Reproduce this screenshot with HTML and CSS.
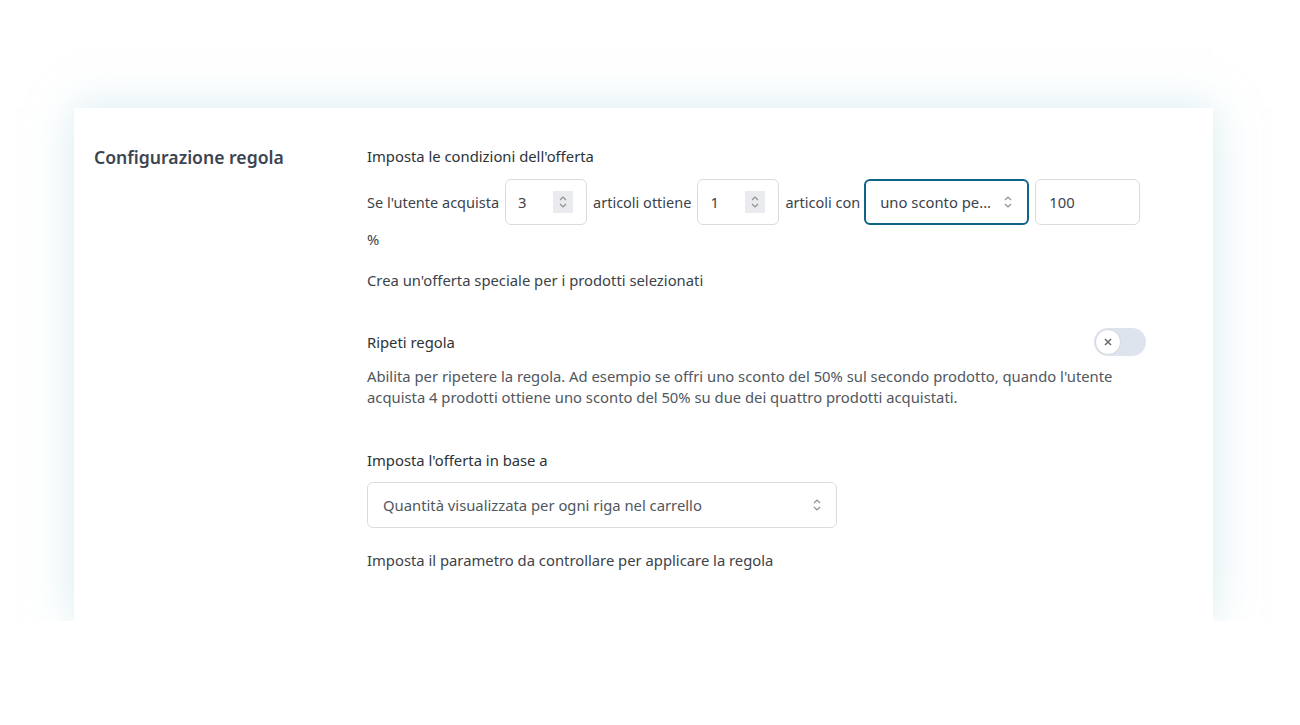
FILE: index.html
```html
<!DOCTYPE html>
<html lang="it">
<head>
  <meta charset="UTF-8">
  <meta name="viewport" content="width=device-width, initial-scale=1.0">
  <title>Configurazione regola</title>
  <link rel="stylesheet" href="styles.css">
</head>
<body>
  <div class="card">
    <!-- Colonna titolo -->
    <div class="side">
      <h2>Configurazione regola</h2>
    </div>

    <!-- Colonna campi -->
    <div class="fields">
      <div class="field">
        <div class="label">Imposta le condizioni dell'offerta</div>
        <div class="condition-row">
          <span>Se l'utente acquista</span>
          <div class="input number">
            <span>3</span>
            <span class="spin">
              <svg width="10" height="14" viewBox="0 0 10 14"><path d="M2 5l3-3 3 3M2 9l3 3 3-3" fill="none" stroke="#8c8f94" stroke-width="1.2"/></svg>
            </span>
          </div>
          <span>articoli ottiene</span>
          <div class="input number">
            <span>1</span>
            <span class="spin">
              <svg width="10" height="14" viewBox="0 0 10 14"><path d="M2 5l3-3 3 3M2 9l3 3 3-3" fill="none" stroke="#8c8f94" stroke-width="1.2"/></svg>
            </span>
          </div>
          <span class="tight">articoli con</span>
          <div class="input select focused">
            <span>uno sconto pe...</span>
            <svg width="10" height="14" viewBox="0 0 10 14"><path d="M2 5l3-3 3 3M2 9l3 3 3-3" fill="none" stroke="#8c8f94" stroke-width="1.2"/></svg>
          </div>
          <div class="input amount">100</div>
        </div>
        <div class="unit">%</div>
        <p class="help">Crea un'offerta speciale per i prodotti selezionati</p>
      </div>

      <div class="field repeat">
        <div class="toggle-row">
          <div class="label">Ripeti regola</div>
          <div class="toggle">
            <span class="knob">
              <svg width="8" height="8" viewBox="0 0 8 8"><path d="M1 1l6 6M7 1l-6 6" stroke="#6b6e73" stroke-width="1.6"/></svg>
            </span>
          </div>
        </div>
        <p class="desc">Abilita per ripetere la regola. Ad esempio se offri uno sconto del 50% sul secondo prodotto, quando l'utente acquista 4 prodotti ottiene uno sconto del 50% su due dei quattro prodotti acquistati.</p>
      </div>

      <div class="field base">
        <div class="label">Imposta l'offerta in base a</div>
        <div class="input wide-select">
          <span>Quantità visualizzata per ogni riga nel carrello</span>
          <svg width="10" height="14" viewBox="0 0 10 14"><path d="M2 5l3-3 3 3M2 9l3 3 3-3" fill="none" stroke="#8c8f94" stroke-width="1.2"/></svg>
        </div>
        <p class="help last">Imposta il parametro da controllare per applicare la regola</p>
      </div>
    </div>
  </div>
</body>
</html>
```

FILE: styles.css
```css
/* Reset */
* {
  margin: 0;
  padding: 0;
  box-sizing: border-box;
}

body {
  font-family: 'Noto Sans', 'Open Sans', sans-serif;
  font-size: 14.8px;
  line-height: 20px;
  color: #3c434a;
  background: #fff;
  padding: 108px 0 0 74px;
}

/* Carta */
.card {
  width: 1139px;
  background: #fff;
  display: flex;
  padding: 39px 67px 51px 20px;
  box-shadow: 0 0 40px rgba(175, 218, 228, 0.5);
}

.side {
  width: 273px;
  flex-shrink: 0;
}

.side h2 {
  font-size: 17.6px;
  font-weight: 600;
  line-height: 24px;
  color: #3d4451;
  margin-top: -2px;
}

.fields {
  flex: 1;
}

.label {
  color: #2c3338;
  margin-top: -1px;
}

/* Riga condizioni */
.condition-row {
  display: flex;
  align-items: center;
  gap: 6px;
  margin-top: 13px;
  white-space: nowrap;
  font-size: 14.5px;
}

.condition-row > * {
  flex-shrink: 0;
}

.condition-row .tight {
  margin-right: -2px;
}

.input {
  height: 46px;
  border: 1px solid #dcdcde;
  border-radius: 6px;
  background: #fff;
  display: flex;
  align-items: center;
  color: #3c434a;
  font-size: 14.8px;
}

.number {
  width: 82px;
  padding: 0 13px 0 12px;
  justify-content: space-between;
}

.spin {
  width: 20px;
  height: 22px;
  background: #eaebee;
  display: flex;
  align-items: center;
  justify-content: center;
}

.select {
  width: 165px;
  padding: 0 14px 0 15px;
  justify-content: space-between;
}

.focused {
  border: 2px solid #0e6389;
  padding-left: 14px;
}

.amount {
  width: 105px;
  padding-left: 13px;
}

.unit {
  margin-top: 4px;
}

.help {
  margin-top: 21px;
  color: #3c434a;
}

/* Ripeti regola */
.repeat {
  margin-top: 38px;
}

.toggle-row {
  display: flex;
  justify-content: space-between;
  align-items: center;
}

.toggle-row .label {
  margin-top: 0;
}

.toggle {
  width: 52px;
  height: 28px;
  border-radius: 14px;
  background: #dde4ee;
  padding: 1px;
}

.knob {
  width: 26px;
  height: 26px;
  border-radius: 50%;
  background: #fff;
  border: 1px solid #d3d8de;
  display: flex;
  align-items: center;
  justify-content: center;
}

.desc {
  margin-top: 10px;
  line-height: 21px;
  color: #50575e;
  padding-right: 20px;
}

/* In base a */
.base {
  margin-top: 42px;
}

.base .label {
  margin-top: 0;
}

.wide-select {
  width: 470px;
  margin-top: 12px;
  padding: 0 14px 0 15px;
  justify-content: space-between;
  color: #50575e;
}

.help.last {
  margin-top: 22px;
}
```
